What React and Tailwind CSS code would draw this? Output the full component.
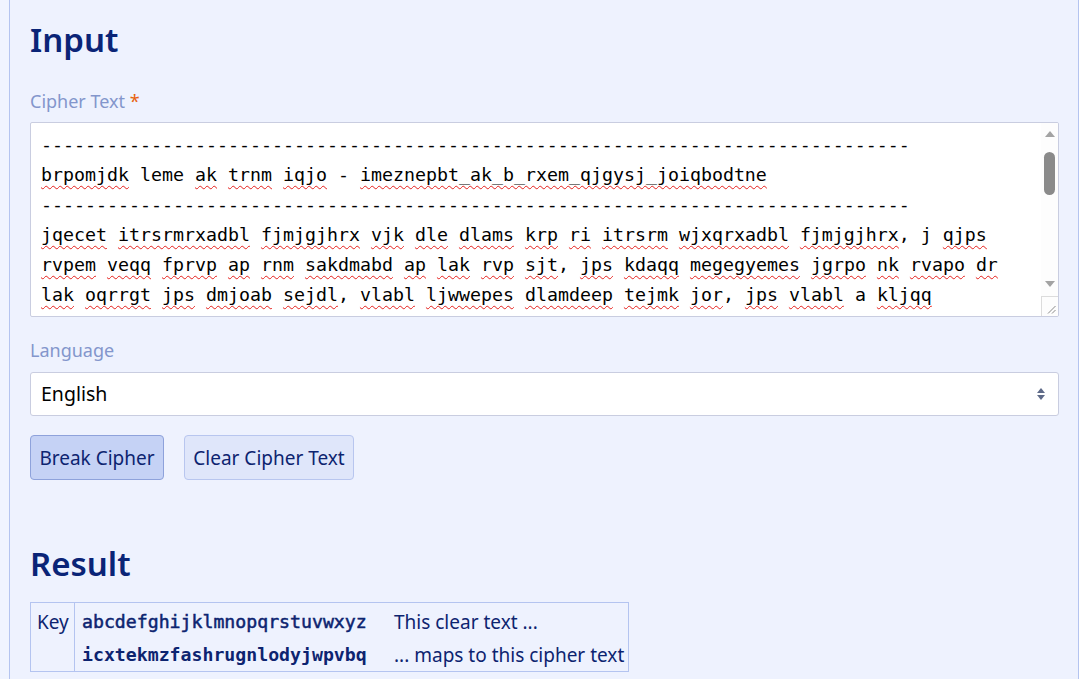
import React from "react";

const DASH = "-".repeat(79);
const LINES = [
  DASH,
  "brpomjdk leme ak trnm iqjo - imeznepbt_ak_b_rxem_qjgysj_joiqbodtne",
  DASH,
  "jqecet itrsrmrxadbl fjmjgjhrx vjk dle dlams krp ri itrsrm wjxqrxadbl fjmjgjhrx, j qjps",
  "rvpem veqq fprvp ap rnm sakdmabd ap lak rvp sjt, jps kdaqq megegyemes jgrpo nk rvapo dr",
  "lak oqrrgt jps dmjoab sejdl, vlabl ljwwepes dlamdeep tejmk jor, jps vlabl a kljqq",
  "ekrgjtm jps dlams itrsrm lak fjmjgjhrx ap jgrpo, vjk kdaqq ljwwepes ri sakdmabd tejmk",
];

const OK = new Set(["leme", "j", "a"]);
const MONO = { fontFamily: '"DejaVu Sans Mono", "Liberation Mono", monospace' };

function Line({ text }) {
  if (/^-+$/.test(text)) return <div className="whitespace-pre">{text}</div>;
  const parts = text.split(/([a-z_]+)/);
  return (
    <div className="whitespace-pre">
      {parts.map((p, i) =>
        /^[a-z_]+$/.test(p) && !OK.has(p) ? (
          <span
            key={i}
            className="underline decoration-wavy decoration-[#e5201c] decoration-1 underline-offset-[4px]"
          >
            {p}
          </span>
        ) : (
          <span key={i}>{p}</span>
        )
      )}
    </div>
  );
}

export default function App() {
  const sans = { fontFamily: '"Noto Sans", "Open Sans", sans-serif' };
  return (
    <div className="min-h-screen bg-[#f0f4ff]" style={sans}>
      <div className="ml-[9px] w-[1070px] min-h-[679px] border-x border-[#b4c4f0] bg-[#eef2fe] pl-[20px] pr-[19px] pt-[19px]">
        <h2 className="text-[33px] leading-[42px] font-semibold text-[#0a2477] mb-[28px]">Input</h2>

        <div className="text-[18px] leading-[24px] text-[#8396cc] mb-[9px]">
          Cipher Text <span className="text-[#e8620e]">*</span>
        </div>

        <div className="flex h-[195px] border border-[#c9cde0] bg-white rounded-[2px] overflow-hidden">
          <div
            className="flex-1 overflow-hidden pl-[10px] pt-[7px] text-[18.27px] leading-[30px] text-black"
            style={MONO}
          >
            {LINES.map((l, i) => (
              <Line key={i} text={l} />
            ))}
          </div>
          <div className="w-[17px] flex flex-col bg-[#fdfdfd]">
            <div className="h-[17px] flex items-center justify-center pt-[4px]">
              <svg width="10" height="6" viewBox="0 0 10 6">
                <path d="M0 6 L5 0 L10 6 Z" fill="#a3a3a3" />
              </svg>
            </div>
            <div className="flex justify-center pt-[12px]">
              <div className="w-[11px] h-[43px] rounded-full bg-[#8a8a8a]" />
            </div>
            <div className="flex-1" />
            <div className="h-[17px] flex items-start justify-center pt-[2px]">
              <svg width="10" height="6" viewBox="0 0 10 6">
                <path d="M0 0 L10 0 L5 6 Z" fill="#a3a3a3" />
              </svg>
            </div>
            <div className="h-[20px] border-t border-l border-[#dcdcdc] flex items-end justify-end pr-[2px] pb-[2px]">
              <svg width="9" height="9" viewBox="0 0 9 9">
                <path d="M8.5 1 L1 8.5 M8.5 5 L5 8.5" stroke="#8a8a8a" strokeWidth="1" />
              </svg>
            </div>
          </div>
        </div>

        <div className="mt-[21px] text-[18px] leading-[24px] text-[#8396cc] mb-[10px]">Language</div>

        <div className="h-[44px] border border-[#c9cde0] bg-white rounded-[3px] flex items-center pl-[10px] pr-[12px]">
          <span className="flex-1 text-[19.5px] text-black">English</span>
          <svg width="10" height="14" viewBox="0 0 10 14">
            <path d="M1 6 L5 1 L9 6 Z" fill="#5e6a88" />
            <path d="M1 8 L9 8 L5 13 Z" fill="#5e6a88" />
          </svg>
        </div>

        <div className="mt-[19px] flex gap-[20px]">
          <button className="h-[45px] w-[134px] rounded-[4px] border border-[#8ea2db] bg-[#c5d2f5] text-[19px] text-[#0d2470] pt-[2px]">
            Break Cipher
          </button>
          <button className="h-[45px] w-[170px] rounded-[4px] border border-[#b8c6ef] bg-[#dfe6fa] text-[19px] text-[#0d2470] pt-[2px]">
            Clear Cipher Text
          </button>
        </div>

        <h2 className="mt-[63px] text-[33px] leading-[42px] font-semibold text-[#0a2477] mb-[17px]">Result</h2>

        <div className="inline-grid grid-cols-[44px_313px_240px] border border-[#b4c4f0] text-[#0d2470]">
          <div className="row-span-2 border-r border-[#b4c4f0] pl-[6px] pt-[6px] text-[19px] leading-[26px]">Key</div>
          <div
            className="pl-[7px] pt-[6px] h-[34px] text-[18.2px] leading-[26px] font-normal [-webkit-text-stroke:0.5px_#0d2470]"
            style={MONO}
          >
            abcdefghijklmnopqrstuvwxyz
          </div>
          <div className="pl-[6px] pt-[6px] text-[19px] leading-[26px]">This clear text ...</div>
          <div className="pl-[7px] pt-[5px] h-[34px] text-[18.2px] leading-[26px] font-bold" style={MONO}>
            icxtekmzfashrugnlodyjwpvbq
          </div>
          <div className="pl-[6px] pt-[5px] text-[19px] leading-[26px]">... maps to this cipher text</div>
        </div>
      </div>
    </div>
  );
}
